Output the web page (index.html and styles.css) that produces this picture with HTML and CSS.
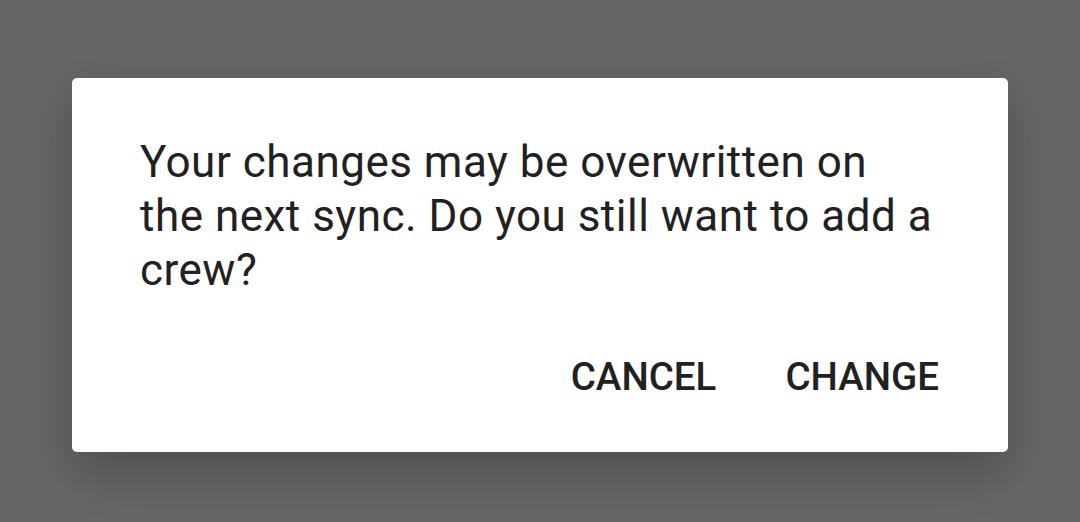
FILE: index.html
```html
<!DOCTYPE html>
<html lang="en">
<head>
    <meta charset="UTF-8">
    <meta name="viewport" content="width=device-width, initial-scale=1.0">
    <title>Add crew</title>
    <link rel="stylesheet" href="styles.css">
</head>
<body>
    <div class="scrim">
        <div class="dialog" role="alertdialog">
            <p class="dialog-message">Your changes may be overwritten on the next sync. Do you still want to add a crew?</p>
            <div class="dialog-actions">
                <button class="dialog-button">Cancel</button>
                <button class="dialog-button">Change</button>
            </div>
        </div>
    </div>
</body>
</html>
```

FILE: styles.css
```css
body {
    margin: 0;
    padding: 0;
    background: #666666;
    font-family: Roboto, "Noto Sans", sans-serif;
    overflow: hidden;
}

.scrim {
    height: 522px;
    padding: 78px 72px 0 72px;
    box-sizing: border-box;
}

.dialog {
    background: #fff;
    border-radius: 5px;
    height: 374px;
    box-sizing: border-box;
    box-shadow: 0 30px 60px rgba(0, 0, 0, 0.12), 0 10px 36px rgba(0, 0, 0, 0.12);
    display: flex;
    flex-direction: column;
}

.dialog-message {
    margin: 0;
    padding: 57px 74px 0 68px;
    font-size: 44px;
    line-height: 54px;
    letter-spacing: 0.5px;
    color: #212121;
}

.dialog-actions {
    display: flex;
    justify-content: flex-end;
    gap: 25px;
    margin-top: 53px;
    padding-right: 47px;
}

.dialog-button {
    background: none;
    border: none;
    padding: 0 22px;
    font-family: inherit;
    font-size: 38.5px;
    font-weight: 500;
    line-height: 54px;
    text-transform: uppercase;
    color: #212121;
}
```
